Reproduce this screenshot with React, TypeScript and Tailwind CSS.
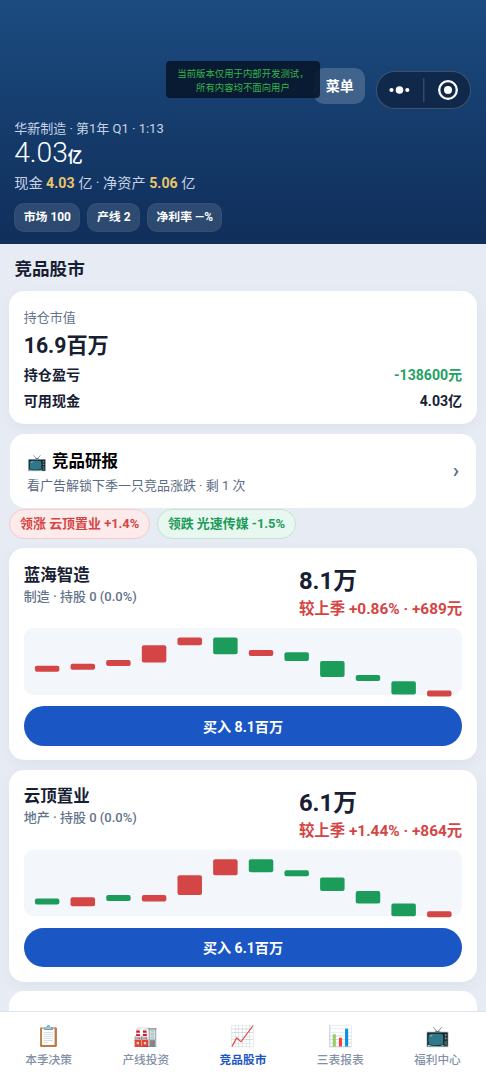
import React from "react";

type Candle = [y: number, h: number, up: boolean];

interface Stock {
  name: string;
  info: string;
  price: string;
  change: string;
  buy: string;
  candles: Candle[];
}

const stocks: Stock[] = [
  {
    name: "蓝海智造",
    info: "制造 · 持股 0 (0.0%)",
    price: "8.1万",
    change: "较上季 +0.86% · +689元",
    buy: "买入 8.1百万",
    candles: [
      [37.8, 6, true],
      [35.8, 6, true],
      [32, 6, true],
      [17.2, 17.4, true],
      [9.6, 7.6, true],
      [9.6, 16.6, false],
      [22, 6, true],
      [24.3, 8.7, false],
      [33, 16, false],
      [47, 6, false],
      [53.2, 13.3, false],
      [62.5, 6, true],
    ],
  },
  {
    name: "云顶置业",
    info: "地产 · 持股 0 (0.0%)",
    price: "6.1万",
    change: "较上季 +1.44% · +864元",
    buy: "买入 6.1百万",
    candles: [
      [48.5, 6, false],
      [47.3, 8.9, true],
      [45, 6, false],
      [45, 6.4, true],
      [25.3, 19.7, true],
      [9.3, 16, true],
      [9.3, 13, false],
      [20.3, 6, false],
      [27.5, 13.5, false],
      [41, 12.4, false],
      [53.4, 12.8, false],
      [61.2, 6, true],
    ],
  },
];

const tabs = [
  { icon: "📋", label: "本季决策" },
  { icon: "🏭", label: "产线投资" },
  { icon: "📈", label: "竞品股市", active: true },
  { icon: "📊", label: "三表报表" },
  { icon: "📺", label: "福利中心" },
];

function Chip({ children }: { children: React.ReactNode }) {
  return (
    <div className="flex h-[29px] items-center rounded-[10px] border border-white/4 bg-white/12 px-[8.5px] pt-[2px] text-[11.9px] font-bold text-white">
      {children}
    </div>
  );
}

function CandleChart({ candles }: { candles: Candle[] }) {
  return (
    <div className="h-[66.5px] rounded-[9px] bg-[#f3f6fb]">
      <svg className="block h-[66.5px] w-full overflow-visible" viewBox="0 0 438.8 66.5">
        {candles.map(([y, h, up], i) => (
          <rect
            key={i}
            x={10.9 + i * 35.68}
            y={y}
            width={24.5}
            height={h}
            rx={2}
            fill={up ? "#d44545" : "#1c9c5b"}
          />
        ))}
      </svg>
    </div>
  );
}

function StockCard({ stock }: { stock: Stock }) {
  return (
    <section className="h-[212px] shrink-0 rounded-[15px] bg-white px-[14.4px] pt-[14.5px] shadow-[0_4px_14px_rgba(20,40,80,0.05)]">
      <div className="flex h-[65.5px] justify-between">
        <div className="pt-[1.4px]">
          <h2 className="text-[16.5px] leading-[24px] font-bold">{stock.name}</h2>
          <p className="text-[13px] leading-[18px] font-medium text-[#64748b]">{stock.info}</p>
        </div>
        <div className="pt-[3.5px]">
          <div className="text-[23.8px] leading-[31px] font-bold">{stock.price}</div>
          <div className="text-[15.4px] leading-[24px] font-bold text-[#d44545]">{stock.change}</div>
        </div>
      </div>
      <CandleChart candles={stock.candles} />
      <button className="mt-[11.5px] flex h-[39.5px] w-full items-center justify-center rounded-full bg-[#1a56c4] pt-[3px] text-[14.1px] font-bold text-white">
        {stock.buy}
      </button>
    </section>
  );
}

export default function App() {
  return (
    <div className="relative flex h-[1080px] w-[486px] flex-col overflow-hidden bg-[#e7ecf4] font-['Roboto','Noto_Sans_CJK_SC',sans-serif] text-[#162032]">
      <header className="flex h-[243.5px] shrink-0 flex-col bg-linear-to-b from-[#1b4b80] to-[#102e5a] px-[14.2px] text-[#c6d3e5]">
        <div className="mr-[0.5px] flex h-[119px] items-start justify-end gap-[11px] pt-[68px]">
          <button className="flex h-[35.5px] w-[51px] items-center justify-center rounded-[10px] bg-white/18 pt-[2px] text-[14px] font-bold text-white">
            菜单
          </button>
          <div className="mt-[3px] flex h-[37.5px] w-[95px] items-center rounded-full border-[1.5px] border-white/20 bg-[#10284a]">
            <svg className="h-[34px] w-full" viewBox="0 0 92 34" fill="white">
              <circle cx="14" cy="17" r="2.1" />
              <circle cx="22" cy="17" r="3.8" />
              <circle cx="29.8" cy="17" r="2.1" />
              <path d="M46.3 5v24" stroke="#475a78" strokeWidth="1" />
              <circle cx="70.5" cy="17" r="8.8" fill="none" stroke="white" strokeWidth="2.3" />
              <circle cx="70.5" cy="17" r="4" />
            </svg>
          </div>
        </div>
        <div className="text-[13px] leading-[19px]">华新制造 · 第1年 Q1 · 1:13</div>
        <div className="flex h-[30px] items-baseline text-white">
          <span className="text-[28.2px] leading-[30px] font-light">4.03</span>
          <span className="text-[14.7px] leading-[20px] font-bold">亿</span>
        </div>
        <div className="mt-[5px] text-[14.2px] leading-[21.5px]">
          现金 <b className="text-[#e9c46a]">4.03</b> 亿 · 净资产 <b className="text-[#e9c46a]">5.06</b> 亿
        </div>
        <div className="mt-[8px] flex gap-[7px]">
          <Chip>市场 100</Chip>
          <Chip>产线 2</Chip>
          <Chip>净利率 —%</Chip>
        </div>
      </header>

      <main className="flex min-h-0 flex-1 flex-col overflow-hidden px-[9.4px]">
        <h1 className="mt-[12px] ml-[5px] h-[35px] shrink-0 text-[17.6px] leading-[27px] font-bold">竞品股市</h1>

        <section className="h-[133.5px] shrink-0 rounded-[15px] bg-white px-[14.4px] pt-[17.5px] shadow-[0_4px_14px_rgba(20,40,80,0.05)]">
          <div className="text-[13px] leading-[20px] text-[#64748b]">持仓市值</div>
          <div className="text-[21.2px] leading-[35px] font-bold">16.9百万</div>
          <div className="flex justify-between text-[14.1px] leading-[25.5px] font-bold">
            <span>持仓盈亏</span>
            <span className="text-[#24a163]">-138600元</span>
          </div>
          <div className="flex justify-between text-[14.1px] leading-[25.5px] font-bold">
            <span>可用现金</span>
            <span>4.03亿</span>
          </div>
        </section>

        <section className="mx-[0.5px] mt-[10px] flex h-[74px] shrink-0 items-center justify-between rounded-[15px] bg-white pr-[17px] pl-[17px]">
          <div className="pt-[6px]">
            <div className="flex h-[23px] items-center gap-[6px] text-[16.5px] font-bold text-black">
              <span className="w-[19px] text-[16px]">📺</span>
              <span>竞品研报</span>
            </div>
            <div className="text-[13px] leading-[23px] text-[#5b6b84]">看广告解锁下季一只竞品涨跌 · 剩 1 次</div>
          </div>
          <span className="pb-[2px] text-[21px] leading-[24px] font-medium text-[#5b6b84]">›</span>
        </section>

        <div className="mt-[1px] flex h-[30px] shrink-0 gap-[7px] text-[12.95px] font-bold">
          <span className="flex items-center rounded-full border border-[#f6caca] bg-[#fdeaea] px-[9.7px] text-[#d44545]">
            领涨 云顶置业 +1.4%
          </span>
          <span className="flex items-center rounded-full border border-[#bfe5d0] bg-[#e8f7ef] px-[9.7px] text-[#1c9c5b]">
            领跌 光速传媒 -1.5%
          </span>
        </div>

        <div className="mt-[9px] flex flex-col gap-[9.5px]">
          {stocks.map((s) => (
            <StockCard key={s.name} stock={s} />
          ))}
          <section className="h-[212px] shrink-0 rounded-[15px] bg-white px-[14.4px] pt-[18px]">
            <h2 className="text-[16.5px] leading-[24px] font-bold">光速传媒</h2>
          </section>
        </div>
      </main>

      <nav className="grid h-[69px] shrink-0 grid-cols-5 border-t border-[#dde4ee] bg-white pt-[10px]">
        {tabs.map((t) => (
          <div key={t.label} className="flex flex-col items-center">
            <span className="h-[28px] text-[20px] leading-[28px]">{t.icon}</span>
            <span
              className={
                t.active
                  ? "text-[11.7px] leading-[20px] font-bold text-[#1a56c4]"
                  : "text-[11.7px] leading-[20px] font-medium text-[#8391a7]"
              }
            >
              {t.label}
            </span>
          </div>
        ))}
      </nav>

      <div className="absolute top-[61px] left-[166px] flex h-[37px] w-[154px] flex-col items-center justify-center rounded-[4px] bg-[#07172b]/90 pt-[2px] text-[9.4px] leading-[13.5px] text-[#37b34a]">
        <span>当前版本仅用于内部开发测试，</span>
        <span>所有内容均不面向用户</span>
      </div>
    </div>
  );
}
